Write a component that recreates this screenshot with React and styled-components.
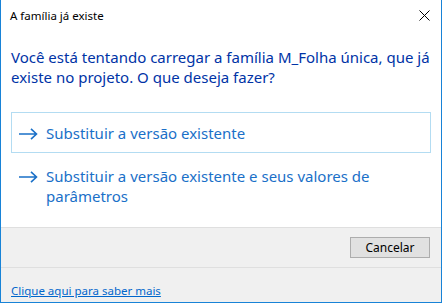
import React from 'react';
import styled, { createGlobalStyle } from 'styled-components';

const GlobalStyle = createGlobalStyle`
  html, body {
    margin: 0;
    padding: 0;
    background: #ffffff;
  }
  * {
    box-sizing: border-box;
  }
`;

const Window = styled.div`
  width: 442px;
  height: 303px;
  display: flex;
  flex-direction: column;
  border: 1px solid #1883d7;
  border-top: none;
  font-family: "Noto Sans", "Open Sans", sans-serif;
  background: #ffffff;
  overflow: hidden;
`;

const TitleBar = styled.div`
  height: 31px;
  display: flex;
  align-items: center;
  justify-content: space-between;
  padding: 0 9px 0 9px;
  font-size: 11.5px;
  color: #000000;
`;

const CloseButton = styled.div`
  width: 14px;
  height: 14px;
  display: flex;
  align-items: center;
  justify-content: center;
  margin-right: 1px;
`;

const Content = styled.div`
  flex: 1;
  padding: 16px 10px 0 10px;
  display: flex;
  flex-direction: column;
`;

const MainInstruction = styled.div`
  font-size: 15px;
  line-height: 20px;
  color: #0033a6;
  margin-bottom: 25px;
`;

const CommandList = styled.div`
  display: flex;
  flex-direction: column;
  gap: 2px;
`;

const CommandLink = styled.div`
  display: flex;
  align-items: flex-start;
  padding: 10px 8px 9px 7px;
  border: 1px solid ${(p) => (p.$focused ? '#b3dcf2' : 'transparent')};
  color: #1a70c8;
  font-size: 15px;
  line-height: 20px;
  cursor: pointer;
`;

const Arrow = styled.svg`
  flex-shrink: 0;
  margin: 5px 8px 0 0;
`;

const Footer = styled.div`
  background: #f0f0f0;
  border-top: 1px solid #dfdfdf;
  display: flex;
  flex-direction: column;
`;

const ButtonRow = styled.div`
  height: 40px;
  display: flex;
  justify-content: flex-end;
  align-items: flex-start;
  padding: 9px 11px 0 0;
  border-bottom: 1px solid #dfdfdf;
`;

const Button = styled.button`
  width: 80px;
  height: 21px;
  padding: 0;
  background: #e1e1e1;
  border: 1px solid #adadad;
  font-family: inherit;
  font-size: 12px;
  color: #000000;
`;

const LinkRow = styled.div`
  height: 34px;
  padding: 10px 10px 0 10px;
`;

const HelpLink = styled.a`
  font-size: 11.5px;
  color: #0066cc;
  text-decoration: underline;
  cursor: pointer;
`;

const ArrowIcon = () => (
  <Arrow width="19" height="12" viewBox="0 0 19 12">
    <path d="M0 6 H17 M12 0.8 L17.5 6 L12 11.2" stroke="#1a70c8" strokeWidth="1.6" fill="none" />
  </Arrow>
);

export default function App() {
  return (
    <>
      <GlobalStyle />
      <Window>
        <TitleBar>
          <span>A família já existe</span>
          <CloseButton>
            <svg width="11" height="11" viewBox="0 0 11 11">
              <path d="M0.5 0.5 L10.5 10.5 M10.5 0.5 L0.5 10.5" stroke="#000" strokeWidth="1" />
            </svg>
          </CloseButton>
        </TitleBar>
        <Content>
          <MainInstruction>
            Você está tentando carregar a família M_Folha única, que já existe no projeto. O que deseja fazer?
          </MainInstruction>
          <CommandList>
            <CommandLink $focused>
              <ArrowIcon />
              <span>Substituir a versão existente</span>
            </CommandLink>
            <CommandLink>
              <ArrowIcon />
              <span>Substituir a versão existente e seus valores de parâmetros</span>
            </CommandLink>
          </CommandList>
        </Content>
        <Footer>
          <ButtonRow>
            <Button>Cancelar</Button>
          </ButtonRow>
          <LinkRow>
            <HelpLink>Clique aqui para saber mais</HelpLink>
          </LinkRow>
        </Footer>
      </Window>
    </>
  );
}
